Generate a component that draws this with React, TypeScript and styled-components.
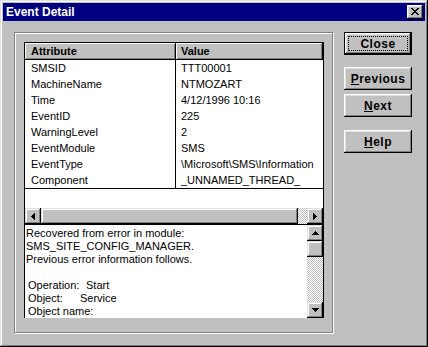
import React from "react";
import styled, { createGlobalStyle, css } from "styled-components";

const GlobalStyle = createGlobalStyle`
  html, body { margin: 0; padding: 0; background: #c0c0c0; }
  body { font-family: "Liberation Sans", Arial, sans-serif; font-size: 11px; color: #000; }
  * { box-sizing: border-box; }
`;

const scrollBevel = css`
  background: #c0c0c0;
  box-shadow: inset -1px -1px #000, inset 1px 1px #dfdfdf, inset -2px -2px #808080, inset 2px 2px #fff;
`;

const pushBevel = css`
  background: #c0c0c0;
  box-shadow: inset -1px -1px #000, inset 1px 1px #fff, inset -2px -2px #808080, inset 2px 2px #dfdfdf;
`;

const checker = css`
  background-color: #c0c0c0;
  background-image: conic-gradient(#fff 25%, #c0c0c0 0 50%, #fff 0 75%, #c0c0c0 0);
  background-size: 2px 2px;
`;

const Window = styled.div`
  width: 428px;
  height: 347px;
  padding: 3px;
  background: #c0c0c0;
  box-shadow: inset -1px -1px #000, inset 1px 1px #dfdfdf, inset -2px -2px #808080, inset 2px 2px #fff;
  display: flex;
  flex-direction: column;
`;

const TitleBar = styled.div`
  height: 18px;
  flex: none;
  background: #000080;
  display: flex;
  align-items: center;
  justify-content: space-between;
  padding: 0 2px 0 3px;
`;

const TitleText = styled.span`
  color: #fff;
  font-weight: bold;
  font-size: 12px;
`;

const TitleButton = styled.div`
  width: 16px;
  height: 14px;
  ${pushBevel};
  display: flex;
  align-items: center;
  justify-content: center;
  padding-right: 1px;
  padding-bottom: 1px;
`;

const Body = styled.div`
  display: flex;
  gap: 11px;
  padding: 11px 0 0 11px;
`;

const Frame = styled.div`
  width: 319px;
  height: 301px;
  border: 1px solid #808080;
  box-shadow: inset 1px 1px #fff, 1px 1px #fff;
  padding: 9px 0 0 9px;
  display: flex;
  flex-direction: column;
`;

const ListView = styled.div`
  width: 300px;
  height: 183px;
  border: 1px solid #000;
  background: #fff;
  display: flex;
  flex-direction: column;
`;

const HeaderRow = styled.div`
  display: flex;
  height: 17px;
  flex: none;
`;

const HeaderCell = styled.div<{ $first?: boolean }>`
  ${({ $first }) => ($first ? "width: 151px; padding-left: 6px;" : "flex: 1; padding-left: 5px;")}
  height: 17px;
  background: #c0c0c0;
  border-right: 1px solid #000;
  border-bottom: 1px solid #000;
  box-shadow: inset 1px 1px #fff, inset -1px -1px #808080;
  font-weight: bold;
  line-height: 16px;
  white-space: nowrap;
`;

const Row = styled.div`
  display: flex;
  height: 16px;
  flex: none;
`;

const Cell = styled.div<{ $first?: boolean }>`
  ${({ $first }) =>
    $first ? "width: 151px; padding-left: 6px; border-right: 1px solid #000;" : "flex: 1; padding-left: 5px;"}
  line-height: 16px;
  white-space: nowrap;
  overflow: hidden;
`;

const RowsEnd = styled.div`
  height: 1px;
  flex: none;
  background: #000;
`;

const Filler = styled.div`
  flex: 1;
`;

const HScroll = styled.div`
  height: 16px;
  flex: none;
  display: flex;
`;

const ScrollButton = styled.div`
  width: 16px;
  height: 16px;
  flex: none;
  ${scrollBevel};
  display: flex;
  align-items: center;
  justify-content: center;
`;

const Thumb = styled.div<{ $size: number; $vertical?: boolean }>`
  flex: none;
  ${({ $size, $vertical }) => ($vertical ? `height: ${$size}px;` : `width: ${$size}px;`)}
  ${scrollBevel};
`;

const Track = styled.div`
  flex: 1;
  ${checker};
`;

const TextPane = styled.div`
  width: 300px;
  height: 93px;
  border-left: 1px solid #000;
  border-right: 1px solid #000;
  background: #fff;
  display: flex;
`;

const TextBody = styled.div`
  flex: 1;
  padding: 2px 0 0 1px;
  line-height: 13px;
  overflow: hidden;
  white-space: nowrap;
`;

const Line = styled.div<{ $indent?: boolean }>`
  height: 13px;
  ${({ $indent }) => ($indent ? "padding-left: 2px;" : "")}
`;

const FieldLabel = styled.span<{ $width: number }>`
  display: inline-block;
  width: ${({ $width }) => $width}px;
`;

const VScroll = styled.div`
  width: 16px;
  flex: none;
  display: flex;
  flex-direction: column;
`;

const ButtonColumn = styled.div`
  width: 68px;
  display: flex;
  flex-direction: column;
`;

const PushButton = styled.div<{ $top: number; $default?: boolean }>`
  position: relative;
  margin-top: ${({ $top }) => $top}px;
  width: 68px;
  height: 23px;
  display: flex;
  align-items: center;
  justify-content: center;
  font-weight: bold;
  font-size: 12px;
  letter-spacing: 0.5px;
  ${pushBevel};
  ${({ $default }) =>
    $default
      ? css`
          border: 1px solid #000;
        `
      : ""}
`;

const FocusRing = styled.span`
  position: absolute;
  left: 3px;
  right: 3px;
  top: 3px;
  bottom: 3px;
  border: 1px dotted #000;
`;

const ArrowIcon = ({ dir }: { dir: "up" | "down" | "left" | "right" }) => {
  const rects: React.ReactElement[] = [];
  for (let i = 0; i < 4; i++) {
    const len = 1 + i * 2;
    const off = 3 - i;
    if (dir === "up") rects.push(<rect key={i} x={off} y={i} width={len} height={1} />);
    if (dir === "down") rects.push(<rect key={i} x={off} y={3 - i} width={len} height={1} />);
    if (dir === "left") rects.push(<rect key={i} x={i} y={off} width={1} height={len} />);
    if (dir === "right") rects.push(<rect key={i} x={3 - i} y={off} width={1} height={len} />);
  }
  const vertical = dir === "up" || dir === "down";
  return (
    <svg width={vertical ? 7 : 4} height={vertical ? 4 : 7} shapeRendering="crispEdges" fill="#000">
      {rects}
    </svg>
  );
};

const CloseGlyph = () => (
  <svg width="8" height="7" shapeRendering="crispEdges" fill="#000">
    <rect x="0" y="0" width="2" height="1" />
    <rect x="6" y="0" width="2" height="1" />
    <rect x="1" y="1" width="2" height="1" />
    <rect x="5" y="1" width="2" height="1" />
    <rect x="2" y="2" width="4" height="1" />
    <rect x="3" y="3" width="2" height="1" />
    <rect x="2" y="4" width="4" height="1" />
    <rect x="1" y="5" width="2" height="1" />
    <rect x="5" y="5" width="2" height="1" />
    <rect x="0" y="6" width="2" height="1" />
    <rect x="6" y="6" width="2" height="1" />
  </svg>
);

const rows: [string, string][] = [
  ["SMSID", "TTT00001"],
  ["MachineName", "NTMOZART"],
  ["Time", "4/12/1996 10:16"],
  ["EventID", "225"],
  ["WarningLevel", "2"],
  ["EventModule", "SMS"],
  ["EventType", "\\Microsoft\\SMS\\Information"],
  ["Component", "_UNNAMED_THREAD_"],
];

export default function App() {
  return (
    <>
      <GlobalStyle />
      <Window>
        <TitleBar>
          <TitleText>Event Detail</TitleText>
          <TitleButton>
            <CloseGlyph />
          </TitleButton>
        </TitleBar>
        <Body>
          <Frame>
            <ListView>
              <HeaderRow>
                <HeaderCell $first>Attribute</HeaderCell>
                <HeaderCell>Value</HeaderCell>
              </HeaderRow>
              {rows.map(([k, v]) => (
                <Row key={k}>
                  <Cell $first>{k}</Cell>
                  <Cell>{v}</Cell>
                </Row>
              ))}
              <RowsEnd />
              <Filler />
              <HScroll>
                <ScrollButton>
                  <ArrowIcon dir="left" />
                </ScrollButton>
                <Thumb $size={257} />
                <Track />
                <ScrollButton>
                  <ArrowIcon dir="right" />
                </ScrollButton>
              </HScroll>
            </ListView>
            <TextPane>
              <TextBody>
                <Line>Recovered from error in module:</Line>
                <Line>SMS_SITE_CONFIG_MANAGER.</Line>
                <Line>Previous error information follows.</Line>
                <Line />
                <Line $indent>
                  <FieldLabel $width={58}>Operation:</FieldLabel>Start
                </Line>
                <Line $indent>
                  <FieldLabel $width={52}>Object:</FieldLabel>Service
                </Line>
                <Line $indent>Object name:</Line>
              </TextBody>
              <VScroll>
                <ScrollButton>
                  <ArrowIcon dir="up" />
                </ScrollButton>
                <Thumb $size={16} $vertical />
                <Track />
                <ScrollButton>
                  <ArrowIcon dir="down" />
                </ScrollButton>
              </VScroll>
            </TextPane>
          </Frame>
          <ButtonColumn>
            <PushButton $top={0} $default>
              <FocusRing />
              Close
            </PushButton>
            <PushButton $top={12}>
              <span>
                <u>P</u>revious
              </span>
            </PushButton>
            <PushButton $top={4}>
              <span>
                <u>N</u>ext
              </span>
            </PushButton>
            <PushButton $top={13}>
              <span>
                <u>H</u>elp
              </span>
            </PushButton>
          </ButtonColumn>
        </Body>
      </Window>
    </>
  );
}
